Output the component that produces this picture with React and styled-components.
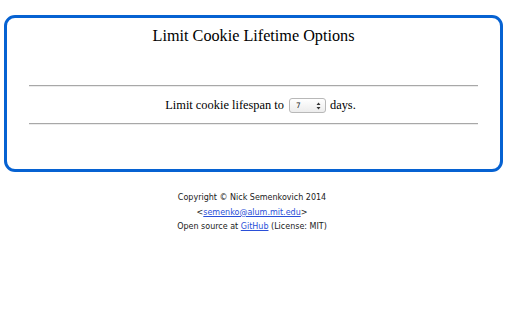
import React from "react";
import styled, { createGlobalStyle } from "styled-components";

const GlobalStyle = createGlobalStyle`
  html, body {
    margin: 0;
    padding: 0;
    background: #ffffff;
  }
`;

const Page = styled.div`
  width: 512px;
  padding-top: 15px;
`;

const Panel = styled.div`
  margin: 0 9px 0 4px;
  height: 151px;
  border: 3px solid #0662d2;
  border-radius: 11px;
  padding: 0 22px;
  font-family: "Liberation Serif", "Times New Roman", serif;
  color: #000;
  text-align: center;
`;

const Title = styled.h1`
  margin: 8px 0 0;
  font-size: 16.2px;
  font-weight: normal;
  line-height: 20px;
`;

const Rule = styled.hr`
  margin: ${(p) => p.$top}px 0 0;
  border: 0;
  border-top: 1px solid #a8a8a8;
  border-bottom: 1px solid #ececec;
  height: 0;
`;

const Setting = styled.div`
  display: flex;
  align-items: center;
  justify-content: center;
  gap: 4px;
  height: 36px;
  padding-left: 14px;
  font-size: 12.4px;
`;

const SelectWrap = styled.span`
  position: relative;
  display: inline-flex;
  margin: 1px 0 0 1px;

  svg {
    position: absolute;
    right: 5px;
    top: 4px;
    pointer-events: none;
  }
`;

const Select = styled.select`
  width: 37px;
  height: 15px;
  padding: 0 0 0 6px;
  margin: 0;
  border: 1px solid #b8b8b8;
  border-radius: 3px;
  background: linear-gradient(#ffffff, #ececec);
  font-family: "DejaVu Sans", Verdana, sans-serif;
  font-size: 7.5px;
  color: #222;
  appearance: none;
  outline: none;
`;

const Footer = styled.div`
  margin-top: 19px;
  padding-right: 8px;
  font-family: "DejaVu Sans", Verdana, sans-serif;
  font-size: 8px;
  line-height: 14.5px;
  color: #1a1a1a;
  text-align: center;

  a {
    color: #2a4fd8;
    text-decoration: underline;
  }
`;

const Arrows = () => (
  <svg width="5" height="8" viewBox="0 0 5 8">
    <path d="M2.5 0.5 L4.5 3 H0.5Z M2.5 7.5 L4.5 5 H0.5Z" fill="#333" />
  </svg>
);

export default function App() {
  return (
    <>
      <GlobalStyle />
      <Page>
        <Panel>
          <Title>Limit Cookie Lifetime Options</Title>
          <Rule $top={39} />
          <Setting>
            <span>Limit cookie lifespan to</span>
            <SelectWrap>
              <Select defaultValue="7">
                <option value="1">1</option>
                <option value="3">3</option>
                <option value="7">7</option>
                <option value="14">14</option>
                <option value="30">30</option>
              </Select>
              <Arrows />
            </SelectWrap>
            <span>days.</span>
          </Setting>
          <Rule $top={0} />
        </Panel>
        <Footer>
          <div>Copyright © Nick Semenkovich 2014</div>
          <div>
            &lt;<a href="mailto:semenko@alum.mit.edu">semenko@alum.mit.edu</a>&gt;
          </div>
          <div>
            Open source at <a href="#">GitHub</a> (License: MIT)
          </div>
        </Footer>
      </Page>
    </>
  );
}
